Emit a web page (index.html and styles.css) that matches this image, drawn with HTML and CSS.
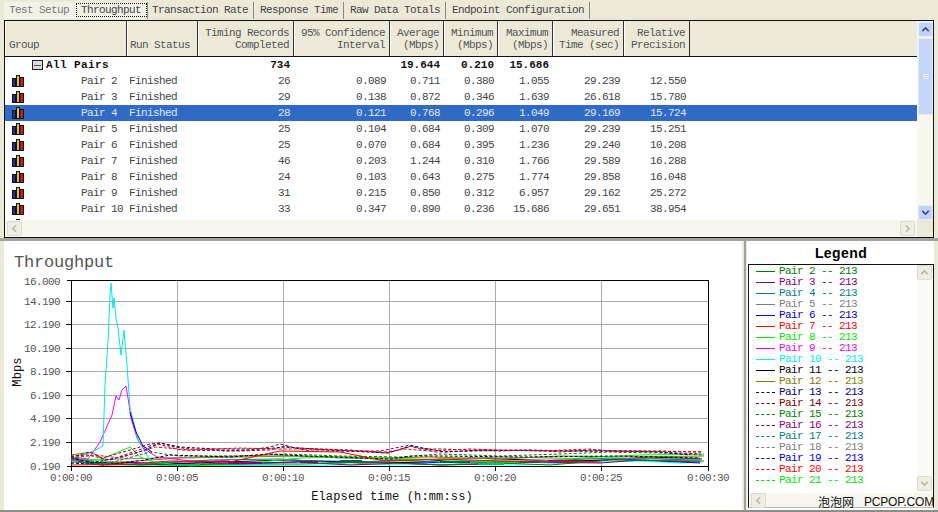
FILE: index.html
```html
<!DOCTYPE html>
<html lang="en">
<head>
    <meta charset="UTF-8">
    <meta name="viewport" content="width=device-width, initial-scale=1.0">
    <title>Throughput</title>
    <link rel="stylesheet" href="styles.css">
</head>
<body>
    <svg class="defs" width="0" height="0">
        <symbol id="pair-icon" viewBox="0 0 12 12">
            <rect x="0.5" y="3.5" width="3" height="8" fill="#1c2fb5" stroke="#111"/>
            <rect x="4.5" y="0.5" width="3" height="11" fill="#d8c23a" stroke="#111"/>
            <rect x="8" y="2.5" width="3.5" height="9" fill="#c8201c" stroke="#111"/>
        </symbol>
        <symbol id="chev-up" viewBox="0 0 16 16"><polyline points="4,10 8,6 12,10" fill="none" stroke="currentColor" stroke-width="2"/></symbol>
        <symbol id="chev-down" viewBox="0 0 16 16"><polyline points="4,6 8,10 12,6" fill="none" stroke="currentColor" stroke-width="2"/></symbol>
        <symbol id="chev-left" viewBox="0 0 16 16"><polyline points="10,4 6,8 10,12" fill="none" stroke="currentColor" stroke-width="2"/></symbol>
        <symbol id="chev-right" viewBox="0 0 16 16"><polyline points="6,4 10,8 6,12" fill="none" stroke="currentColor" stroke-width="2"/></symbol>
    </svg>

    <div class="tabs">
        <div class="tab tab-first">Test Setup</div>
        <div class="tab tab-active"><span>Throughput</span></div>
        <div class="tab tab-3">Transaction Rate</div>
        <div class="tab tab-4">Response Time</div>
        <div class="tab tab-5">Raw Data Totals</div>
        <div class="tab tab-6">Endpoint Configuration</div>
    </div>

    <div class="table-panel">
        <div class="table-left">
            <div class="grid-view">
                <table>
                    <colgroup>
                        <col class="c-group"><col class="c-status"><col class="c-wide"><col class="c-wide"><col class="c-num"><col class="c-num"><col class="c-max"><col class="c-status"><col class="c-prec"><col class="c-fill">
                    </colgroup>
                    <thead>
                        <tr>
                            <th class="left first">Group</th>
                            <th class="left status-head">Run Status</th>
                            <th>Timing Records<br>Completed</th>
                            <th>95% Confidence<br>Interval</th>
                            <th>Average<br>(Mbps)</th>
                            <th>Minimum<br>(Mbps)</th>
                            <th>Maximum<br>(Mbps)</th>
                            <th>Measured<br>Time (sec)</th>
                            <th>Relative<br>Precision</th>
                            <th class="filler"></th>
                        </tr>
                    </thead>
                    <tbody>
                        <tr class="total">
                            <td class="name"><div class="all-pairs"><span class="minus"></span>All Pairs</div></td>
                            <td></td><td>734</td><td></td><td>19.644</td><td>0.210</td><td>15.686</td><td></td><td></td><td></td>
                        </tr>
                        <tr><td class="name"><div class="pair"><svg class="icon"><use href="#pair-icon"/></svg>Pair 2</div></td><td class="status">Finished</td><td>26</td><td>0.089</td><td>0.711</td><td>0.380</td><td>1.055</td><td>29.239</td><td>12.550</td><td></td></tr>
                        <tr><td class="name"><div class="pair"><svg class="icon"><use href="#pair-icon"/></svg>Pair 3</div></td><td class="status">Finished</td><td>29</td><td>0.138</td><td>0.872</td><td>0.346</td><td>1.639</td><td>26.618</td><td>15.780</td><td></td></tr>
                        <tr class="selected"><td class="name"><div class="pair"><svg class="icon"><use href="#pair-icon"/></svg>Pair 4</div></td><td class="status">Finished</td><td>28</td><td>0.121</td><td>0.768</td><td>0.296</td><td>1.049</td><td>29.169</td><td>15.724</td><td></td></tr>
                        <tr><td class="name"><div class="pair"><svg class="icon"><use href="#pair-icon"/></svg>Pair 5</div></td><td class="status">Finished</td><td>25</td><td>0.104</td><td>0.684</td><td>0.309</td><td>1.070</td><td>29.239</td><td>15.251</td><td></td></tr>
                        <tr><td class="name"><div class="pair"><svg class="icon"><use href="#pair-icon"/></svg>Pair 6</div></td><td class="status">Finished</td><td>25</td><td>0.070</td><td>0.684</td><td>0.395</td><td>1.236</td><td>29.240</td><td>10.208</td><td></td></tr>
                        <tr><td class="name"><div class="pair"><svg class="icon"><use href="#pair-icon"/></svg>Pair 7</div></td><td class="status">Finished</td><td>46</td><td>0.203</td><td>1.244</td><td>0.310</td><td>1.766</td><td>29.589</td><td>16.288</td><td></td></tr>
                        <tr><td class="name"><div class="pair"><svg class="icon"><use href="#pair-icon"/></svg>Pair 8</div></td><td class="status">Finished</td><td>24</td><td>0.103</td><td>0.643</td><td>0.275</td><td>1.774</td><td>29.858</td><td>16.048</td><td></td></tr>
                        <tr><td class="name"><div class="pair"><svg class="icon"><use href="#pair-icon"/></svg>Pair 9</div></td><td class="status">Finished</td><td>31</td><td>0.215</td><td>0.850</td><td>0.312</td><td>6.957</td><td>29.162</td><td>25.272</td><td></td></tr>
                        <tr><td class="name"><div class="pair"><svg class="icon"><use href="#pair-icon"/></svg>Pair 10</div></td><td class="status">Finished</td><td>33</td><td>0.347</td><td>0.890</td><td>0.236</td><td>15.686</td><td>29.651</td><td>38.954</td><td></td></tr>
                        <tr><td class="name"><div class="pair"><svg class="icon"><use href="#pair-icon"/></svg></div></td><td></td><td></td><td></td><td></td><td></td><td></td><td></td><td></td><td></td></tr>
                    </tbody>
                </table>
            </div>
            <div class="hscroll">
                <div class="sb-btn off"><svg><use href="#chev-left"/></svg></div>
                <div class="sb-btn off"><svg><use href="#chev-right"/></svg></div>
            </div>
        </div>
        <div class="vscroll-col">
            <div class="vscroll blue">
                <div class="sb-btn on"><svg><use href="#chev-up"/></svg></div>
                <div class="thumb"><i></i><i></i><i></i></div>
                <div class="track"></div>
                <div class="sb-btn on"><svg><use href="#chev-down"/></svg></div>
            </div>
            <div class="corner"></div>
        </div>
    </div>

    <div class="split-h"></div>

    <div class="lower">
        <div class="chart">
            <svg class="plot" width="739" height="269" viewBox="4 241 739 269">
                <text class="chart-title" x="14" y="267">Throughput</text>

                <g class="grid">
                    <path d="M71 301H708M71 324H708M71 348H708M71 371H708M71 395H708M71 418H708M71 442H708"/>
                    <path d="M177 280V466M283 280V466M389 280V466M495 280V466M601 280V466"/>
                </g>
                <g class="axis">
                    <path d="M66.5 280.5H708.5V466.5H66.5M71.5 280.5V471"/>
                    <path d="M66 301.5H71M66 324.5H71M66 348.5H71M66 371.5H71M66 395.5H71M66 418.5H71M66 442.5H71"/>
                    <path d="M177.5 466V471M283.5 466V471M389.5 466V471M495.5 466V471M601.5 466V471M708.5 466V471"/>
                </g>

                <g class="y-labels">
                    <text x="60" y="285">16.000</text>
                    <text x="60" y="305">14.190</text>
                    <text x="60" y="328">12.190</text>
                    <text x="60" y="352">10.190</text>
                    <text x="60" y="375">8.190</text>
                    <text x="60" y="399">6.190</text>
                    <text x="60" y="422">4.190</text>
                    <text x="60" y="446">2.190</text>
                    <text x="60" y="470">0.190</text>
                </g>
                <g class="x-labels">
                    <text x="71" y="481">0:00:00</text>
                    <text x="177" y="481">0:00:05</text>
                    <text x="283" y="481">0:00:10</text>
                    <text x="389" y="481">0:00:15</text>
                    <text x="495" y="481">0:00:20</text>
                    <text x="601" y="481">0:00:25</text>
                    <text x="708" y="481">0:00:30</text>
                </g>
                <text class="axis-name" x="392" y="500">Elapsed time (h:mm:ss)</text>
                <text class="axis-name" transform="translate(21 372) rotate(-90)">Mbps</text>

                <g class="lines">
                    <!-- low bundle -->
                    <polyline stroke="#00ffff" points="150,460 157,465 240,465.5 330,465 420,464 520,465 600,462 640,461 680,463 702,462"/>
                    <polyline stroke="#0000ff" points="71,458 85,463 110,462 150,463 200,461 260,463 320,461 385,462 420,463 480,461 560,462 620,459 700,463"/>
                    <polyline stroke="#800080" points="71,460 100,465 160,464 200,463 240,464 300,462 350,465 400,463 440,465 490,464 530,462 600,463 640,460 700,462"/>
                    <polyline stroke="#000000" points="71,457 90,462 140,465 220,462 290,460 360,463 420,462 470,458 530,460 590,461 650,457 702,459"/>
                    <polyline stroke="#008080" points="71,462 130,465 210,460 280,459 340,463 400,460 460,463 540,461 610,458 700,460"/>
                    <polyline stroke="#808000" points="71,455 92,452 108,463 180,458 240,457 300,456 380,458 430,457 500,459 560,456 640,457 704,456"/>
                    <polyline stroke="#808080" points="71,461 120,459 200,457 270,455 340,458 420,460 500,457 600,459 700,458"/>
                    <polyline stroke="#00ff00" points="71,459 100,460 130,447 140,457 153,462 190,466 240,464 300,458 350,457 450,460 520,463 580,458 640,455 704,454"/>
                    <polyline stroke="#008000" points="71,458 100,464 170,465 230,464 300,464 370,462 440,465 500,463 550,465 610,460 704,461"/>
                    <path class="thick" stroke="#800080" d="M228 463H262M300 462H318M548 461H576"/>
                    <path class="thick" stroke="#006060" d="M340 461H362M440 462H470M520 462H540"/>
                    <path class="thick" stroke="#00c060" d="M176 465H200M478 464H504"/>

                    <!-- spike -->
                    <polyline stroke="#ff00ff" points="72,457 88,459 93,452 100,442 112,415 116,396 119,400 122,390 126,386 128,398 131,418 137,438 143,448 157,457 200,462 230,460"/>
                    <polyline stroke="#00e8e8" points="72,458 90,453 103,446 105,385 108,342 110,295 111,283 113,308 114,298 116,318 118,328 121,355 124,330 127,365 130,408 135,428 138,440 150,460"/>
                    <polyline stroke="#0000c0" points="130,412 136,432 143,446 152,452"/>

                    <!-- upper bundle, dashed pairs -->
                    <polyline class="dash" stroke="#008000" points="71,459 110,463 150,452 180,456 240,456 285,454 340,456 400,457 440,454 500,456 560,454 610,452 660,453 704,455"/>
                    <polyline class="dash" stroke="#000000" points="71,463 105,465 145,460 170,455 230,457 270,454 305,456 390,459 412,456 440,456 520,457 620,456 700,458"/>
                    <polyline class="dash" stroke="#800080" points="71,456 88,455 110,460 150,446 158,444 180,450 240,451 270,450 285,446 310,451 380,451 410,445 435,452 520,450 590,451 640,451 700,454"/>
                    <polyline class="dash" stroke="#000080" points="71,458 92,463 125,456 145,450 160,443 180,447 215,449 265,449 283,447 300,448 345,451 388,453 412,446 445,452 480,450 560,451 615,451 660,452 690,455"/>
                    <polyline class="dash" stroke="#800000" points="71,457 90,452 102,458 130,450 150,444 160,443 175,447 190,449 210,449 225,451 250,450 270,447 280,444 295,448 320,449 350,450 385,453 395,451 410,446 420,449 440,449 470,450 500,451 530,450 560,452 590,450 620,451 640,451 702,452"/>
                    <polyline class="dash" stroke="#ff0000" points="71,458 95,455 120,458 155,447 190,450 240,448 275,449 300,449 335,450 385,452 405,449 430,451 470,449 500,450 540,451 590,449 620,452 660,451 702,452"/>
                    <polyline stroke="#ff0000" points="71,465 130,464 170,461 230,462 280,451 340,452 385,461 440,459 500,461 600,462"/>
                </g>
            </svg>
        </div>
        <div class="split-v"></div>
        <div class="legend">
            <div class="legend-title">Legend</div>
            <div class="legend-box">
                <div class="legend-body">
                    <ul class="legend-list">
                        <li class="c2"><i></i>Pair 2 -- 213</li>
                        <li class="c3"><i></i>Pair 3 -- 213</li>
                        <li class="c4"><i></i>Pair 4 -- 213</li>
                        <li class="c5"><i></i>Pair 5 -- 213</li>
                        <li class="c6"><i></i>Pair 6 -- 213</li>
                        <li class="c7"><i></i>Pair 7 -- 213</li>
                        <li class="c8"><i></i>Pair 8 -- 213</li>
                        <li class="c9"><i></i>Pair 9 -- 213</li>
                        <li class="c10"><i></i>Pair 10 -- 213</li>
                        <li class="c11"><i></i>Pair 11 -- 213</li>
                        <li class="c12"><i></i>Pair 12 -- 213</li>
                        <li class="c13 dash"><i></i>Pair 13 -- 213</li>
                        <li class="c14 dash"><i></i>Pair 14 -- 213</li>
                        <li class="c2 dash"><i></i>Pair 15 -- 213</li>
                        <li class="c3 dash"><i></i>Pair 16 -- 213</li>
                        <li class="c4 dash"><i></i>Pair 17 -- 213</li>
                        <li class="c5 dash"><i></i>Pair 18 -- 213</li>
                        <li class="c6 dash"><i></i>Pair 19 -- 213</li>
                        <li class="c7 dash"><i></i>Pair 20 -- 213</li>
                        <li class="c8 dash"><i></i>Pair 21 -- 213</li>
                    </ul>
                    <div class="vscroll legend-v">
                        <div class="sb-btn off"><svg><use href="#chev-up"/></svg></div>
                        <div class="track"></div>
                        <div class="sb-btn off"><svg><use href="#chev-down"/></svg></div>
                    </div>
                </div>
                <div class="hscroll legend-h">
                    <div class="sb-btn off"><svg><use href="#chev-left"/></svg></div>
                </div>
            </div>
        </div>
    </div>
    <div class="bottom-line"></div>

    <div class="watermark"><span>泡泡网</span><span class="latin">PCPOP.COM</span></div>
</body>
</html>
```

FILE: styles.css
```css
html, body{
    margin: 0;
    padding: 0;
}
body{
    position: relative;
    width: 938px;
    height: 512px;
    overflow: hidden;
    background-color: #ece9d8;
    font-family: "Liberation Mono", "DejaVu Sans Mono", monospace;
    font-size: 11px;
    letter-spacing: -0.6px;
    color: #444;
}
.defs{
    position: absolute;
}

/* tabs */
.tabs{
    display: flex;
    height: 20px;
    padding-left: 4px;
    box-sizing: border-box;
    white-space: pre;
}
.tab{
    height: 17px;
    margin-top: 2px;
    line-height: 17px;
    box-sizing: border-box;
    border-right: 1px solid #8d8b7d;
}
.tab-first{
    width: 71px;
    padding-left: 5px;
    color: #777;
    background-color: #f4f2e8;
    border-right: none;
}
.tab-active{
    width: 73px;
    padding: 1px 0 0 1px;
    line-height: 13px;
    background-color: #f3f1e6;
}
.tab-active span{
    display: block;
    width: 71px;
    height: 14px;
    padding-left: 4px;
    box-sizing: border-box;
    border: 1px dotted #222;
}
.tab-3{ width: 106px; padding-left: 4px; }
.tab-4{ width: 90px; padding-left: 6px; }
.tab-5{ width: 102px; padding-left: 6px; }
.tab-6{ width: 144px; padding-left: 6px; }

/* top table */
.table-panel{
    display: flex;
    width: 930px;
    height: 218px;
    margin-left: 4px;
    box-sizing: border-box;
    border: 1px solid #111;
}
.table-left{
    width: 912px;
}
.grid-view{
    height: 199px;
    overflow: hidden;
    background-color: #fff;
}
table{
    width: 912px;
    table-layout: fixed;
    border-collapse: separate;
    border-spacing: 0;
}
.c-group{ width: 122px; }
.c-status{ width: 71px; }
.c-wide{ width: 96px; }
.c-num{ width: 54px; }
.c-max{ width: 55px; }
.c-prec{ width: 66px; }
.c-fill{ width: 227px; }
th{
    height: 36px;
    padding: 0 4px 5px 0;
    box-sizing: border-box;
    vertical-align: bottom;
    text-align: right;
    font-weight: normal;
    line-height: 12px;
    white-space: pre;
    color: #555;
    background-color: #ece9d8;
    border-bottom: 1px solid #111;
    border-right: 1px solid #333;
    box-shadow: inset 1px 0 #fff;
}
th.left{
    text-align: left;
}
th.first{
    padding-left: 4px;
}
th.status-head{
    padding-left: 3px;
}
th.filler{
    border-right: none;
    box-shadow: none;
}
td{
    height: 16px;
    padding: 0 4px 0 0;
    box-sizing: border-box;
    line-height: 16px;
    text-align: right;
    white-space: pre;
}
td.name{
    padding: 0;
    text-align: left;
}
td.status{
    padding-left: 2px;
    text-align: left;
}
.pair{
    display: flex;
    align-items: center;
    gap: 57px;
    height: 16px;
    padding-left: 7px;
}
.icon{
    flex: none;
    width: 12px;
    height: 12px;
}
.all-pairs{
    display: flex;
    align-items: center;
    gap: 3px;
    padding-left: 27px;
    letter-spacing: 0.4px;
}
.minus{
    width: 11px;
    height: 10px;
    box-sizing: border-box;
    border: 1px solid #222;
    background: linear-gradient(#555, #555) center / 7px 1px no-repeat #ddd;
}
.total td{
    font-weight: bold;
    letter-spacing: 0;
    color: #111;
}
.selected td{
    color: #dfe8f8;
    background-color: #316ac5;
}

/* scrollbars */
.hscroll{
    display: flex;
    justify-content: space-between;
    align-items: center;
    height: 15px;
    padding: 1px 2px;
    background-color: #f7f6ef;
}
.vscroll-col{
    width: 16px;
}
.vscroll{
    display: flex;
    flex-direction: column;
    height: 199px;
    background-color: #f7f6ef;
}
.corner{
    height: 17px;
    background-color: #ece9d8;
}
.sb-btn{
    flex: none;
    width: 15px;
    height: 15px;
    box-sizing: border-box;
    border-radius: 2px;
}
.sb-btn svg{
    display: block;
    width: 100%;
    height: 100%;
}
.sb-btn.on{
    margin: 1px 0 0 1px;
    color: #35507f;
    background-color: #c3d3f8;
    border: 1px solid #e4ebfb;
}
.sb-btn.off{
    color: #b9b7aa;
    background-color: #efeee5;
    border: 1px solid #dddbcd;
}
.thumb{
    display: flex;
    flex-direction: column;
    align-items: center;
    justify-content: center;
    gap: 1px;
    flex: none;
    height: 77px;
    margin: 1px 0 0 1px;
    width: 15px;
    box-sizing: border-box;
    background-color: #c5d4f9;
    border: 1px solid #e4ebfb;
}
.thumb i{
    width: 6px;
    height: 1px;
    background-color: #eef3ff;
}
.track{
    flex: 1;
}

/* splitters */
.split-h{
    height: 3px;
    background-color: #a2a19a;
}
.lower{
    display: flex;
    height: 269px;
    padding-left: 4px;
}
.split-v{
    width: 2px;
    margin: 0 1px;
    background-color: #a2a19a;
}
.bottom-line{
    height: 2px;
    background-color: #8f8e86;
}

/* chart */
.chart{
    width: 738px;
    margin-right: 1px;
    background-color: #fff;
}
.plot{
    display: block;
}
.plot text{
    fill: #555;
    letter-spacing: -0.6px;
}
.plot .chart-title{
    font-size: 17px;
    letter-spacing: -0.2px;
}
.grid path{
    fill: none;
    stroke: #aaa;
    stroke-width: 1;
    shape-rendering: crispEdges;
}
.axis path{
    fill: none;
    stroke: #000;
    stroke-width: 1;
    shape-rendering: crispEdges;
}
.y-labels text{
    text-anchor: end;
}
.x-labels text{
    text-anchor: middle;
}
.plot .axis-name{
    font-size: 12px;
    letter-spacing: 0.15px;
    fill: #111;
    text-anchor: middle;
}
.lines polyline{
    fill: none;
    stroke-width: 1;
}
.lines polyline.dash{
    stroke-dasharray: 3 2;
}
.lines .thick{
    fill: none;
    stroke-width: 2;
}

/* legend */
.legend{
    width: 187px;
    background-color: #fff;
}
.legend-title{
    height: 23px;
    margin-left: 1px;
    font-family: "Liberation Sans", Arial, sans-serif;
    font-size: 14px;
    font-weight: bold;
    letter-spacing: 0.4px;
    line-height: 25px;
    text-align: center;
    color: #000;
}
.legend-box{
    width: 186px;
    height: 244px;
    margin-left: 1px;
    box-sizing: border-box;
    border: 1px solid #111;
    border-bottom-color: #bbb;
}
.legend-body{
    display: flex;
    height: 228px;
}
.legend-list{
    flex: 1;
    margin: 0;
    padding: 1px 0 0 7px;
    list-style: none;
}
.legend-list li{
    display: flex;
    align-items: center;
    gap: 4px;
    height: 11px;
    line-height: 11px;
    white-space: pre;
}
.legend-list li i{
    width: 19px;
    border-top: 1px solid currentColor;
}
.legend-list li.dash i{
    border-top-style: dashed;
}
.c2{ color: #008000; }
.c3{ color: #800080; }
.c4{ color: #008080; }
.c5{ color: #808080; }
.c6{ color: #0000e0; }
.c7{ color: #ff0000; }
.c8{ color: #00e800; }
.c9{ color: #f000f0; }
.c10{ color: #00f0f0; }
.c11{ color: #000; }
.c12{ color: #808000; }
.c13{ color: #000080; }
.c14{ color: #800000; }
.legend-v{
    flex: none;
    width: 15px;
    height: 226px;
    margin-right: 1px;
    background-color: #fbfaf6;
}
.legend-h{
    height: 14px;
    padding: 0 2px;
}

/* jpeg watermark sitting over the legend corner */
.watermark{
    position: absolute;
    top: 495px;
    right: 4px;
    display: flex;
    gap: 10px;
    font-family: "Noto Sans CJK SC", sans-serif;
    font-size: 12px;
    letter-spacing: 0;
    line-height: 14px;
    color: #111;
}
.watermark .latin{
    font-family: "Liberation Sans", Arial, sans-serif;
    letter-spacing: -0.2px;
}
```
